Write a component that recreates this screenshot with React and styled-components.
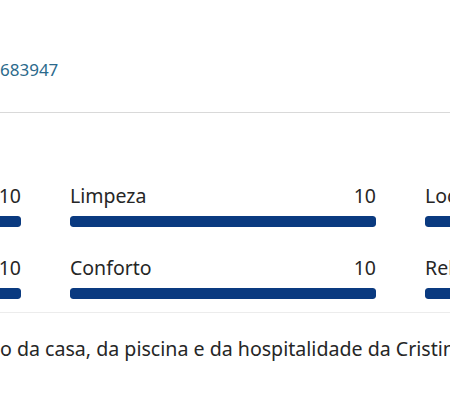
import React from "react"
import styled, { createGlobalStyle } from "styled-components"

const Global = createGlobalStyle`
  html, body {
    margin: 0;
    padding: 0;
    background: #fff;
    overflow: hidden;
  }
  body {
    font-family: "Noto Sans", "Open Sans", sans-serif;
    color: #262626;
  }
`

const Page = styled.div`
  width: 450px;
  height: 410px;
  overflow: hidden;
`

const Contact = styled.div`
  padding: 58px 0 0 0;
  height: 54px;
  font-size: 17px;
  line-height: 24px;
  color: #2b6a8c;
  border-bottom: 1px solid #d9d9d9;
`

const Scores = styled.div`
  display: grid;
  grid-template-columns: repeat(3, 306px);
  column-gap: 49px;
  row-gap: 28px;
  margin-left: -285px;
  padding: 70px 0 13px;
  border-bottom: 1px solid #ececec;
  width: 1100px;
`

const Score = styled.div`
  display: flex;
  flex-direction: column;
`

const ScoreHead = styled.div`
  display: flex;
  justify-content: space-between;
  font-size: 19.5px;
  line-height: 26px;
  height: 26px;
  color: #262626;
`

const Bar = styled.div`
  margin-top: 7px;
  height: 11px;
  border-radius: 3px;
  background: #e6e6e6;
  overflow: hidden;
`

const Fill = styled.div`
  height: 100%;
  background: #0a3a80;
  border-radius: 3px;
`

const Review = styled.p`
  margin: 23px 0 0 0;
  font-size: 19.6px;
  line-height: 26px;
  white-space: nowrap;
  color: #262626;
`

const scores = [
  { label: "Funcionários", value: 10 },
  { label: "Limpeza", value: 10 },
  { label: "Localização", value: 10 },
  { label: "Comodidades", value: 10 },
  { label: "Conforto", value: 10 },
  { label: "Relação qualidade/preço", value: 10 },
]

export default function App() {
  return (
    <Page>
      <Global />
      <Contact>683947</Contact>
      <Scores>
        {scores.map(s => (
          <Score key={s.label}>
            <ScoreHead>
              <span>{s.label}</span>
              <span>{s.value}</span>
            </ScoreHead>
            <Bar>
              <Fill style={{ width: `${s.value * 10}%` }} />
            </Bar>
          </Score>
        ))}
      </Scores>
      <Review>o da casa, da piscina e da hospitalidade da Cristina.</Review>
    </Page>
  )
}
